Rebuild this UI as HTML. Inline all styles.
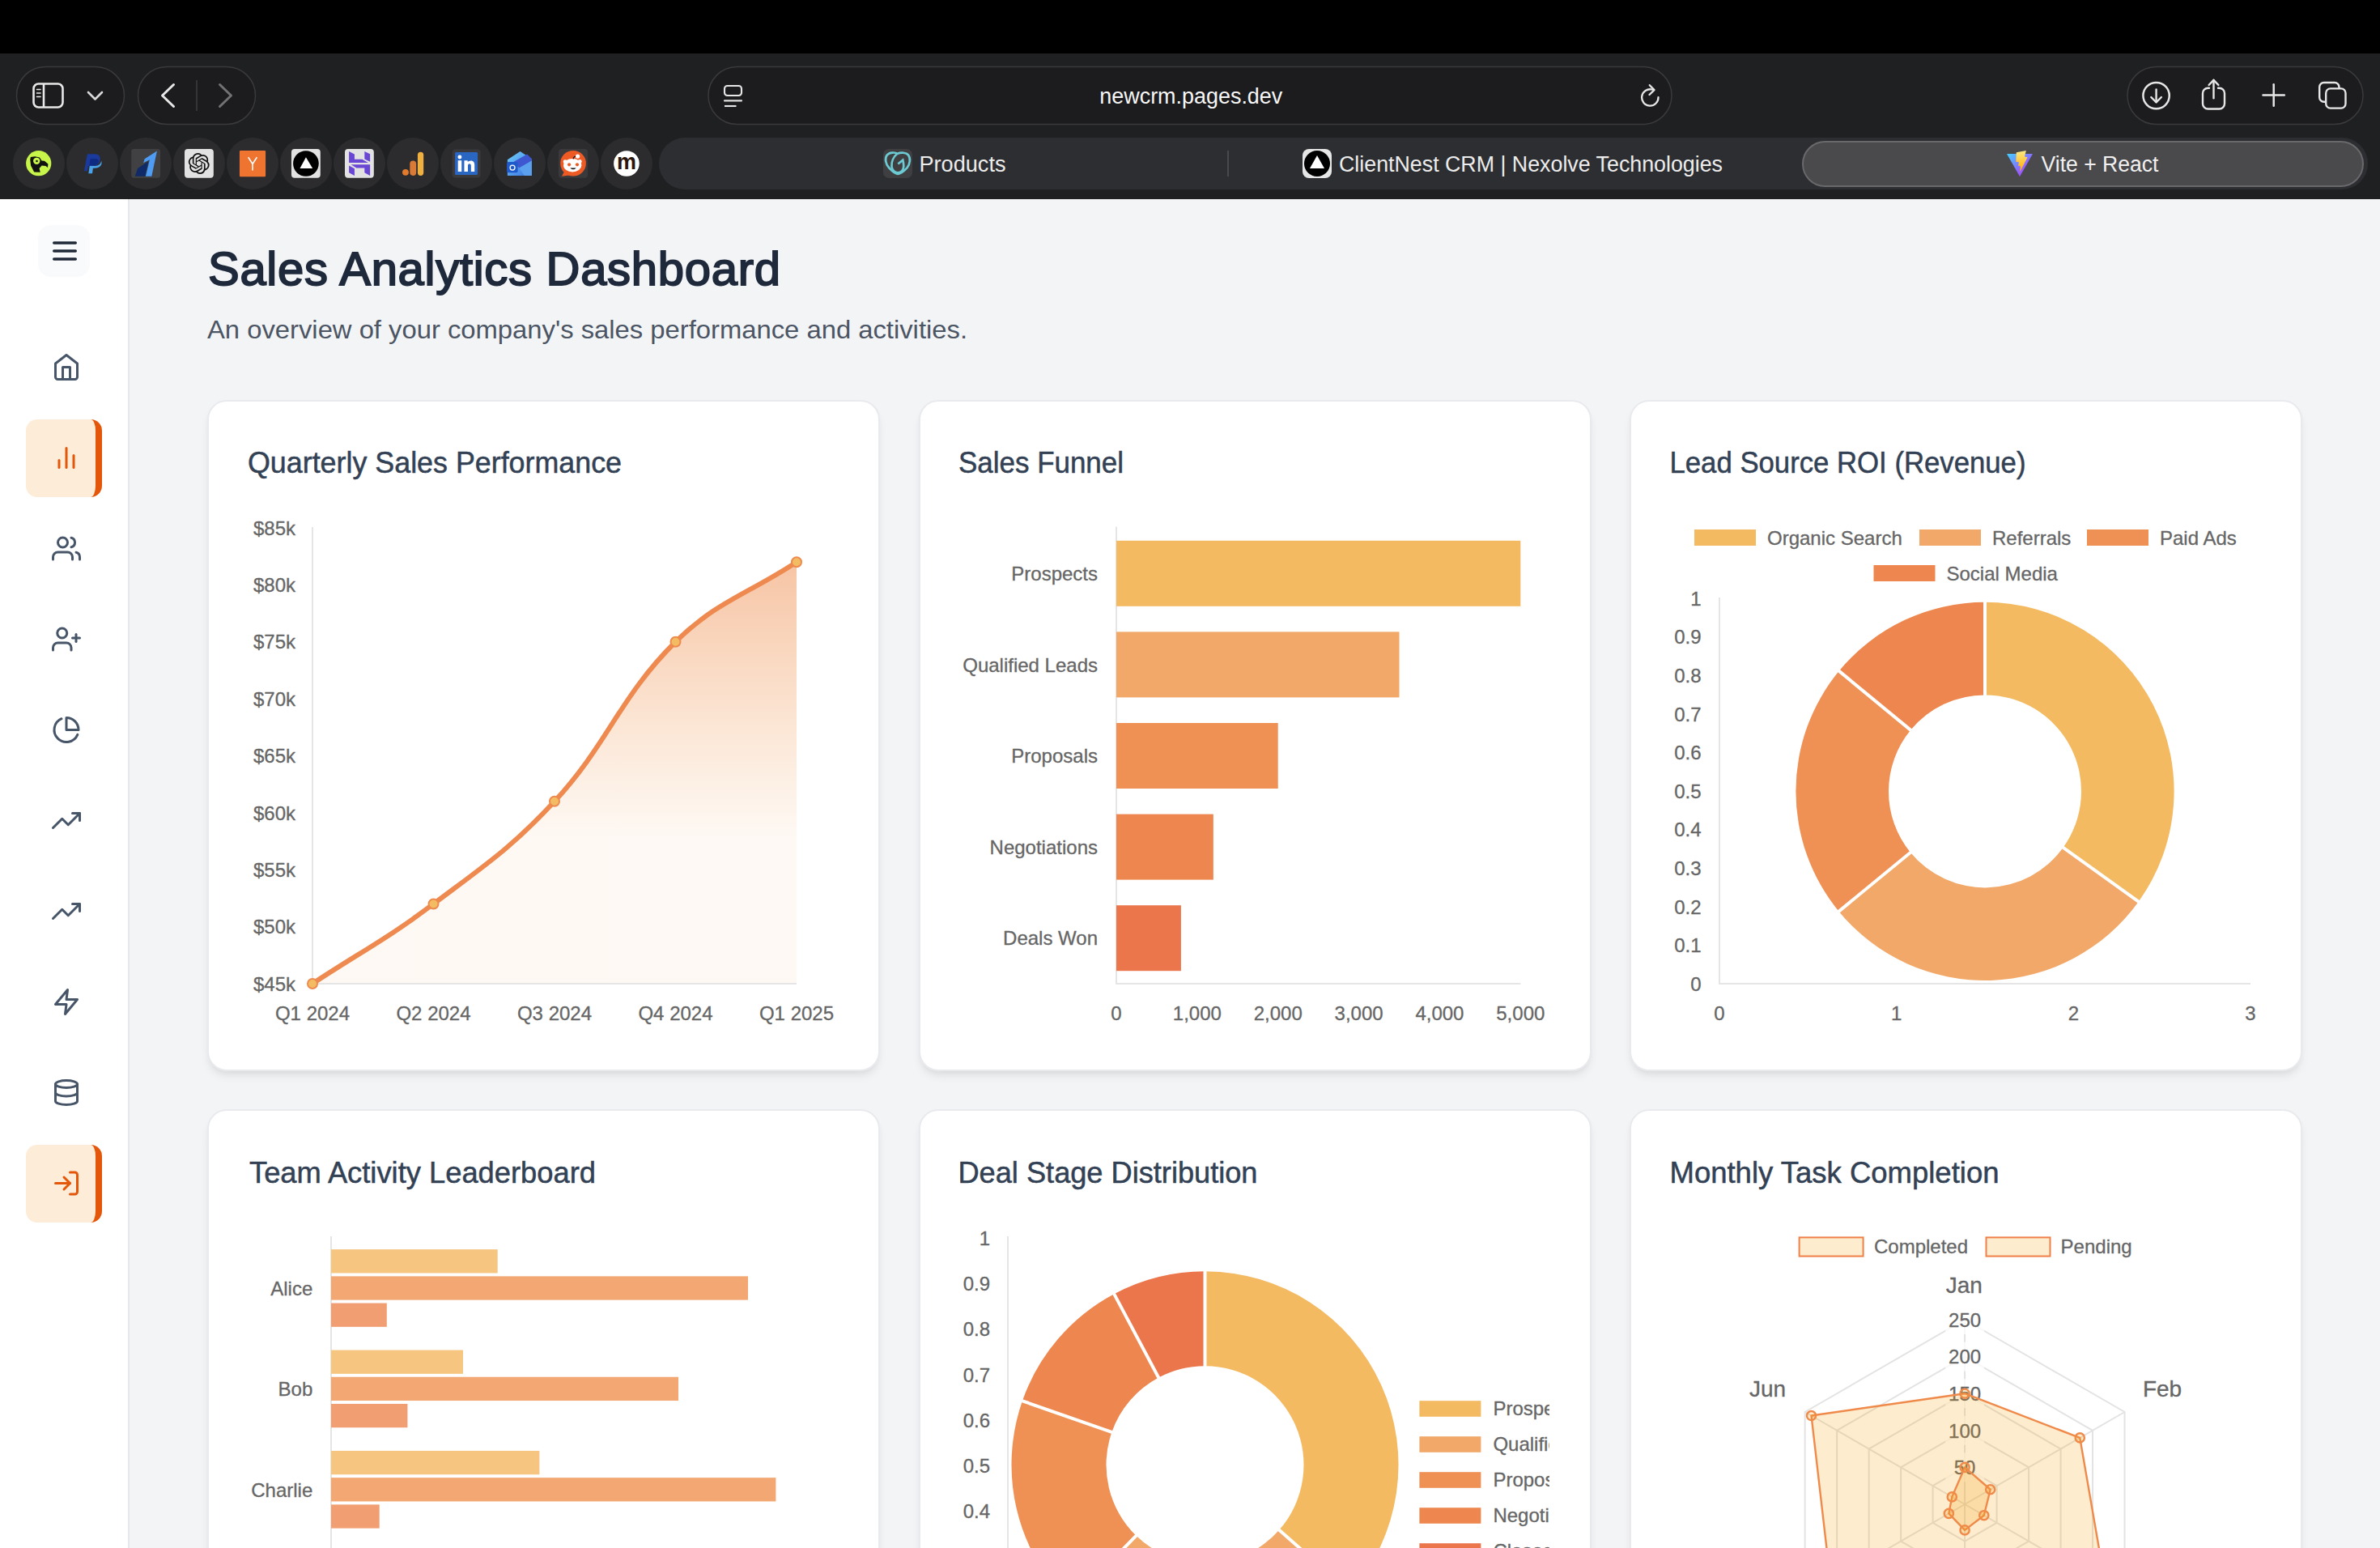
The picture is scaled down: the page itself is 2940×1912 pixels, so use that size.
<!DOCTYPE html>
<html><head><meta charset="utf-8"><title>Sales Analytics Dashboard</title><style>
html,body{margin:0;padding:0;}
body{width:2940px;height:1912px;overflow:hidden;position:relative;background:#f3f4f6;font-family:"Liberation Sans",sans-serif;}
.a{position:absolute;}
#top{left:0;top:0;width:2940px;height:66px;background:#000;}
#tb{left:0;top:66px;width:2940px;height:180px;background:#1f2022;}
#side{left:0;top:246px;width:158px;height:1666px;background:#fff;border-right:2px solid #e5e7eb;}
.card{position:absolute;background:#fff;border:2px solid #e9eaee;border-radius:24px;box-sizing:border-box;
 box-shadow:0 8px 12px -2px rgba(0,0,0,.07),0 4px 8px -4px rgba(0,0,0,.07);}
.act{position:absolute;left:32px;width:94px;height:96px;box-sizing:border-box;background:#fdecd7;border-right:8px solid #e4570b;border-radius:14px;}
svg.main{position:absolute;left:0;top:0;}
text{font-family:"Liberation Sans",sans-serif;}
text[fill="#666666"]{stroke:#666666;stroke-width:0.3px;}
</style></head><body>
<div id="top" class="a"></div>
<div id="tb" class="a"></div>
<div id="side" class="a"></div>
<div class="act" style="top:518px"></div>
<div class="act" style="top:1414px"></div>
<div class="card" style="left:256px;top:494px;width:831px;height:829px"></div>
<div class="card" style="left:1135px;top:494px;width:831px;height:829px"></div>
<div class="card" style="left:2013px;top:494px;width:831px;height:829px"></div>
<div class="card" style="left:256px;top:1370px;width:831px;height:829px"></div>
<div class="card" style="left:1135px;top:1370px;width:831px;height:829px"></div>
<div class="card" style="left:2013px;top:1370px;width:831px;height:829px"></div>

<svg class="main" width="2940" height="1912" viewBox="0 0 2940 1912">
<rect x="20.5" y="82.5" width="133" height="71" rx="35.5" fill="#1c1c1e" stroke="#3a3a3c" stroke-width="1.5"/>
<rect x="170.5" y="82.5" width="145" height="71" rx="35.5" fill="#1c1c1e" stroke="#3a3a3c" stroke-width="1.5"/>
<rect x="875" y="82.5" width="1190" height="71" rx="35.5" fill="#1c1c1e" stroke="#3a3a3c" stroke-width="1.5"/>
<rect x="2628" y="82.5" width="291" height="71" rx="35.5" fill="#1c1c1e" stroke="#3a3a3c" stroke-width="1.5"/>
<rect x="41.5" y="103.5" width="36" height="29" rx="6" fill="none" stroke="#e8e8e8" stroke-width="2.6"/>
<line x1="54" y1="104" x2="54" y2="132" stroke="#e8e8e8" stroke-width="2.6"/>
<line x1="45.5" y1="110.5" x2="50" y2="110.5" stroke="#e8e8e8" stroke-width="1.6" stroke-linecap="round"/>
<line x1="45.5" y1="115" x2="50" y2="115" stroke="#e8e8e8" stroke-width="1.6" stroke-linecap="round"/>
<line x1="45.5" y1="119.5" x2="50" y2="119.5" stroke="#e8e8e8" stroke-width="1.6" stroke-linecap="round"/>
<polyline points="109,114 117.5,122.5 126,114" fill="none" stroke="#d8d8d8" stroke-width="2.6" stroke-linecap="round" stroke-linejoin="round"/>
<polyline points="214.5,104.5 200.5,118 214.5,131.5" fill="none" stroke="#e8e8e8" stroke-width="3" stroke-linecap="round" stroke-linejoin="round"/>
<line x1="243" y1="99" x2="243" y2="137" stroke="#3c3c3e" stroke-width="1.5"/>
<polyline points="271.5,104.5 285.5,118 271.5,131.5" fill="none" stroke="#727274" stroke-width="3" stroke-linecap="round" stroke-linejoin="round"/>
<rect x="895" y="106" width="21" height="12" rx="3.5" fill="none" stroke="#e6e6e6" stroke-width="2.1"/>
<line x1="895" y1="124.4" x2="916" y2="124.4" stroke="#e0e0e0" stroke-width="2.1" stroke-linecap="round"/>
<line x1="895" y1="131" x2="909.5" y2="131" stroke="#e6e6e6" stroke-width="2.1"/>
<text x="1471.30" y="128.00" font-size="27" fill="#f7f7f7" text-anchor="middle" font-weight="500" textLength="226" lengthAdjust="spacingAndGlyphs" >newcrm.pages.dev</text>
<path d="M2048.5,120.2 A10.2,10.2 0 1 1 2040.5,110.5 L2042.5,110.9" fill="none" stroke="#e6e6e6" stroke-width="2.3" stroke-linecap="round"/>
<polyline points="2037.8,105.2 2043.5,111.1 2037.5,117" fill="none" stroke="#e6e6e6" stroke-width="2.3" stroke-linecap="round" stroke-linejoin="round"/>
<circle cx="2663.6" cy="118.1" r="16.2" fill="none" stroke="#e6e6e6" stroke-width="2.5"/>
<line x1="2663.6" y1="110.4" x2="2663.6" y2="126" stroke="#e6e6e6" stroke-width="2.4" stroke-linecap="round"/>
<polyline points="2657.3,120 2663.6,126.3 2669.9,120" fill="none" stroke="#e6e6e6" stroke-width="2.4" stroke-linecap="round" stroke-linejoin="round"/>
<path d="M2729,108.7 H2727.5 a6.5,6.5 0 0 0 -6.5,6.5 V128 a6.5,6.5 0 0 0 6.5,6.5 H2741.5 a6.5,6.5 0 0 0 6.5,-6.5 V115.2 a6.5,6.5 0 0 0 -6.5,-6.5 H2740" fill="none" stroke="#e6e6e6" stroke-width="2.4" stroke-linecap="round"/>
<line x1="2734.5" y1="99" x2="2734.5" y2="121.2" stroke="#e6e6e6" stroke-width="2.4" stroke-linecap="round"/>
<polyline points="2728.6,105 2734.5,98.8 2740.4,105" fill="none" stroke="#e6e6e6" stroke-width="2.4" stroke-linecap="round" stroke-linejoin="round"/>
<line x1="2795.5" y1="117.5" x2="2821.8" y2="117.5" stroke="#e6e6e6" stroke-width="2.5" stroke-linecap="round"/>
<line x1="2808.7" y1="104.3" x2="2808.7" y2="130.7" stroke="#e6e6e6" stroke-width="2.5" stroke-linecap="round"/>
<rect x="2865.2" y="102" width="24.3" height="23.7" rx="5.5" fill="none" stroke="#e6e6e6" stroke-width="2.4"/>
<rect x="2873.2" y="109.4" width="24.3" height="24.2" rx="5.5" fill="#1c1c1e" stroke="#e6e6e6" stroke-width="2.4"/>
<circle cx="48" cy="202" r="32" fill="#2c2c2f"/>
<circle cx="114" cy="202" r="32" fill="#2c2c2f"/>
<circle cx="180" cy="202" r="32" fill="#2c2c2f"/>
<circle cx="246" cy="202" r="32" fill="#2c2c2f"/>
<circle cx="312" cy="202" r="32" fill="#2c2c2f"/>
<circle cx="378" cy="202" r="32" fill="#2c2c2f"/>
<circle cx="444" cy="202" r="32" fill="#2c2c2f"/>
<circle cx="510" cy="202" r="32" fill="#2c2c2f"/>
<circle cx="576" cy="202" r="32" fill="#2c2c2f"/>
<circle cx="642" cy="202" r="32" fill="#2c2c2f"/>
<circle cx="708" cy="202" r="32" fill="#2c2c2f"/>
<circle cx="774" cy="202" r="32" fill="#2c2c2f"/>
<circle cx="47.71" cy="201.71" r="15.6" fill="#c8f54a"/>
<polygon points="37.83,193.89 43.18,193.31 48.95,194.55 51.58,198.42 54.88,198.83 59.41,202.54 59.00,206.90 56.36,205.01 51.58,204.60 48.54,208.06 49.77,212.67 42.19,212.42 38.08,204.43 37.25,197.18" fill="#111"/>
<circle cx="45.24" cy="198.83" r="4.2" fill="#c8f54a"/><circle cx="45.49" cy="199.00" r="1.3" fill="#111"/>
<path d="M107.85,190.18 L116.91,190.18 C123.50,190.18 124.73,195.12 122.92,199.65 C121.02,203.77 117.32,205.01 112.38,205.01 L109.08,205.01 L107.85,211.19 L103.97,211.19 Z" fill="#1a3a9c"/>
<path d="M110.73,205.01 L117.32,205.01 C122.26,204.60 124.57,202.29 125.14,198.42 C126.79,202.95 123.91,207.73 116.49,207.73 L114.85,207.73 L114.02,214.23 L109.33,214.23 Z" fill="#4aa3e8"/>
<path d="M111.55,196.36 L118.97,196.36 C123.08,196.77 123.08,202.54 117.32,204.18 L110.32,204.18 Z" fill="#0f2a82"/>
<rect x="162.21" y="184.00" width="35.83" height="35.83" rx="3" fill="#414143"/>
<polygon points="166.74,217.78 170.04,207.89 183.22,199.24 179.51,217.78" fill="#0f2a66"/>
<polygon points="193.92,186.47 187.33,217.78 179.92,217.78 184.86,197.18 177.04,201.14 178.69,196.19" fill="#4f9cf5"/>
<rect x="228.00" y="184.00" width="35.83" height="35.83" rx="4" fill="#e2e2e2"/>
<path d="M22.2819 9.8211a5.9847 5.9847 0 0 0-.5157-4.9108 6.0462 6.0462 0 0 0-6.5098-2.9A6.0651 6.0651 0 0 0 4.9807 4.1818a5.9847 5.9847 0 0 0-3.9977 2.9 6.0462 6.0462 0 0 0 .7427 7.0966 5.98 5.98 0 0 0 .511 4.9107 6.051 6.051 0 0 0 6.5146 2.9001A5.9847 5.9847 0 0 0 13.2599 24a6.0557 6.0557 0 0 0 5.7718-4.2058 5.9894 5.9894 0 0 0 3.9977-2.9001 6.0557 6.0557 0 0 0-.7475-7.0729zm-9.022 12.6081a4.4755 4.4755 0 0 1-2.8764-1.0408l.1419-.0804 4.7783-2.7582a.7948.7948 0 0 0 .3927-.6813v-6.7369l2.02 1.1686a.071.071 0 0 1 .038.052v5.5826a4.504 4.504 0 0 1-4.4945 4.4944zm-9.6607-4.1254a4.4708 4.4708 0 0 1-.5346-3.0137l.142.0852 4.783 2.7582a.7712.7712 0 0 0 .7806 0l5.8428-3.3685v2.3324a.0804.0804 0 0 1-.0332.0615L9.74 19.9502a4.4992 4.4992 0 0 1-6.1408-1.6464zM2.3408 7.8956a4.485 4.485 0 0 1 2.3655-1.9728V11.6a.7664.7664 0 0 0 .3879.6765l5.8144 3.3543-2.0201 1.1685a.0757.0757 0 0 1-.071 0l-4.8303-2.7865A4.504 4.504 0 0 1 2.3408 7.872zm16.5963 3.8558L13.1038 8.364 15.1192 7.2a.0757.0757 0 0 1 .071 0l4.8303 2.7913a4.4944 4.4944 0 0 1-.6765 8.1042v-5.6772a.79.79 0 0 0-.407-.667zm2.0107-3.0231l-.142-.0852-4.7735-2.7818a.7759.7759 0 0 0-.7854 0L9.409 9.2297V6.8974a.0662.0662 0 0 1 .0284-.0615l4.8303-2.7866a4.4992 4.4992 0 0 1 6.6802 4.66zM8.3065 12.863l-2.02-1.1638a.0804.0804 0 0 1-.038-.0567V6.0742a4.4992 4.4992 0 0 1 7.3757-3.4537l-.142.0805L8.704 5.459a.7948.7948 0 0 0-.3927.6813zm1.0976-2.3654l2.602-1.4998 2.6069 1.4998v2.9994l-2.5974 1.4997-2.6067-1.4997Z" fill="#111" transform="translate(232.75,189.00) scale(1.08)"/>
<rect x="295.96" y="186.06" width="32.13" height="32.13" rx="1" fill="#ee7430"/>
<polyline points="306.67,194.30 312.02,202.54 317.38,194.30" fill="none" stroke="#fff" stroke-width="1.6"/><line x1="312.02" y1="202.54" x2="312.02" y2="210.53" stroke="#fff" stroke-width="1.6"/>
<rect x="359.96" y="184.00" width="35.83" height="35.83" rx="4" fill="#e2e2e2"/>
<circle cx="377.92" cy="201.96" r="15.82" fill="#000"/>
<polygon points="377.92,194.30 386.16,207.89 370.51,207.89" fill="#fff"/>
<rect x="426.00" y="184.00" width="35.83" height="35.83" rx="4" fill="#e2e2e2"/>
<polygon points="431.11,186.89 437.95,190.59 437.95,196.77 447.42,196.77 454.83,200.89 431.11,200.89" fill="#6a46d4"/>
<polygon points="450.30,186.89 457.14,190.18 457.14,199.82 450.30,196.52" fill="#6a46d4"/>
<polygon points="431.11,204.60 437.95,208.30 437.95,216.95 431.11,213.25" fill="#6a46d4"/>
<polygon points="457.14,203.36 457.14,216.95 450.30,213.25 450.30,207.48 440.42,207.48 433.58,203.36" fill="#6a46d4"/>
<circle cx="500.96" cy="212.83" r="3.95" fill="#e27b2c"/>
<rect x="506.32" y="198.42" width="7.83" height="18.53" rx="3.87" fill="#d97a36"/>
<rect x="515.95" y="187.71" width="7.25" height="29.24" rx="3.62" fill="#f0b040"/>
<rect x="558.62" y="184.42" width="35.01" height="35.01" rx="4" fill="#3a3a3c"/>
<rect x="562.08" y="187.96" width="28.01" height="28.01" rx="1.5" fill="#2a67c3"/>
<circle cx="567.93" cy="194.05" r="2.47" fill="#fff"/>
<rect x="565.71" y="198.17" width="4.53" height="13.84" fill="#fff"/>
<path d="M573.45,212.01 V198.17 H577.73 V200.07 C579.22,198.01 586.22,196.77 586.22,203.77 V212.01 H581.85 V204.60 C581.85,201.30 577.98,201.30 577.98,204.60 V212.01 Z" fill="#fff"/>
<defs><linearGradient id="olg" x1="0" y1="0" x2="1" y2="1"><stop offset="0" stop-color="#6fd0fb"/><stop offset="1" stop-color="#3b6fe0"/></linearGradient></defs>
<polygon points="626.89,197.18 642.54,186.89 656.95,196.36 656.95,216.95 626.89,216.95" fill="url(#olg)"/>
<polygon points="634.71,199.65 651.19,190.59 656.95,196.36 656.95,198.42 641.30,207.48" fill="#3e56d0"/>
<polygon points="641.30,207.48 656.95,198.42 656.95,216.95 647.89,216.95" fill="#5aa0ee"/>
<rect x="626.06" y="200.07" width="13.59" height="13.18" rx="2" fill="#1f5acb"/>
<circle cx="633.06" cy="207.07" r="2.97" fill="none" stroke="#fff" stroke-width="1.32"/>
<rect x="689.90" y="184.00" width="36.24" height="35.83" rx="4" fill="#3a3a3c"/>
<circle cx="708.02" cy="201.71" r="15.82" fill="#ee5a24"/>
<polygon points="694.02,217.78 696.49,212.83 704.73,216.13" fill="#ee5a24"/>
<circle cx="698.14" cy="199.82" r="2.47" fill="#fff"/><circle cx="716.26" cy="199.49" r="2.47" fill="#fff"/>
<ellipse cx="707.20" cy="204.18" rx="11.12" ry="8.24" fill="#fff"/>
<circle cx="703.08" cy="203.36" r="2.06" fill="#ee5a24"/><circle cx="712.97" cy="203.36" r="2.06" fill="#ee5a24"/>
<path d="M704.32,207.48 Q708.02,211.19 711.73,207.48 Z" fill="#111"/>
<path d="M708.02,196.36 Q708.85,192.65 712.14,193.06" fill="none" stroke="#111" stroke-width="1.2"/>
<circle cx="713.62" cy="193.06" r="2.64" fill="#fff"/>
<circle cx="773.92" cy="201.96" r="15.82" fill="#fff"/>
<text x="773.92" y="208.71" font-size="28" fill="#2a160c" text-anchor="middle" font-weight="bold" textLength="24" lengthAdjust="spacingAndGlyphs" >m</text>
<rect x="814" y="170" width="2111" height="64" rx="32" fill="#2d2e31"/>
<line x1="1517" y1="186" x2="1517" y2="218" stroke="#48494c" stroke-width="2"/>
<rect x="1091" y="184" width="36" height="36" rx="7" fill="#3f3f41"/>
<g transform="translate(1086,180) scale(0.028433)" fill="none" stroke="#6ccad3" stroke-width="95" stroke-linecap="butt"><path d="M800,345 C700,280 450,270 340,410 C240,540 270,790 430,960 C560,1100 700,1215 810,1225 C920,1215 1080,1100 1210,960 C1350,790 1370,540 1270,410 C1180,290 950,280 800,345 Z"/><path d="M770,360 C620,480 530,700 545,900 C560,1080 690,1170 810,1170 C950,1170 1065,1060 1065,890 C1065,760 1040,660 1030,620 L820,790"/></g>
<text x="1135.50" y="212.00" font-size="27" fill="#ececec" font-weight="500" textLength="107" lengthAdjust="spacingAndGlyphs" >Products</text>
<rect x="1609" y="184" width="36" height="36" rx="8" fill="#e6e6e6"/>
<circle cx="1627" cy="202" r="16" fill="#000"/>
<polygon points="1627,192 1636,208 1618,208" fill="#fff"/>
<text x="1654.00" y="212.00" font-size="27" fill="#ececec" font-weight="500" textLength="474" lengthAdjust="spacingAndGlyphs" >ClientNest CRM | Nexolve Technologies</text>
<rect x="2227" y="175" width="692" height="55" rx="27.5" fill="#4a4a4d" stroke="#69696b" stroke-width="2"/>
<defs><linearGradient id="vg1" x1="0" y1="0" x2="1" y2="1"><stop offset="0" stop-color="#41d1ff"/><stop offset="0.55" stop-color="#8a6cff"/><stop offset="1" stop-color="#c030ff"/></linearGradient><linearGradient id="vg2" x1="0" y1="0" x2="0" y2="1"><stop offset="0" stop-color="#ffea83"/><stop offset="1" stop-color="#ffa800"/></linearGradient></defs>
<polygon points="2479,190 2511,190 2495,218" fill="url(#vg1)"/>
<polygon points="2490.78,188.28 2502.85,185.96 2500.96,193.52 2504.59,194.24 2495.29,212.27 2495.87,205.29 2493.11,204.85 2493.84,200.20 2490.35,199.77" fill="url(#vg2)"/>
<text x="2521.50" y="212.00" font-size="27" fill="#f0f0f0" font-weight="500" textLength="145" lengthAdjust="spacingAndGlyphs" >Vite + React</text>
<rect x="47" y="278" width="64" height="64" rx="16" fill="#f9fafb"/>
<g transform="translate(60.00,290.00) scale(1.6667)" fill="none" stroke="#1f2937" stroke-width="2" stroke-linecap="round" stroke-linejoin="round"><line x1="4" y1="12" x2="20" y2="12"/><line x1="4" y1="6" x2="20" y2="6"/><line x1="4" y1="18" x2="20" y2="18"/></g>
<g transform="translate(64.00,435.50) scale(1.5000)" fill="none" stroke="#475569" stroke-width="2" stroke-linecap="round" stroke-linejoin="round"><path d="M3 9l9-7 9 7v11a2 2 0 0 1-2 2H5a2 2 0 0 1-2-2z"/><polyline points="9 22 9 12 15 12 15 22"/></g>
<g transform="translate(64.00,547.50) scale(1.5000)" fill="none" stroke="#e4570b" stroke-width="2" stroke-linecap="round" stroke-linejoin="round"><line x1="18" y1="20" x2="18" y2="10"/><line x1="12" y1="20" x2="12" y2="4"/><line x1="6" y1="20" x2="6" y2="14"/></g>
<g transform="translate(64.00,659.50) scale(1.5000)" fill="none" stroke="#475569" stroke-width="2" stroke-linecap="round" stroke-linejoin="round"><path d="M17 21v-2a4 4 0 0 0-4-4H5a4 4 0 0 0-4 4v2"/><circle cx="9" cy="7" r="4"/><path d="M23 21v-2a4 4 0 0 0-3-3.87"/><path d="M16 3.13a4 4 0 0 1 0 7.75"/></g>
<g transform="translate(64.00,771.50) scale(1.5000)" fill="none" stroke="#475569" stroke-width="2" stroke-linecap="round" stroke-linejoin="round"><path d="M16 21v-2a4 4 0 0 0-4-4H5a4 4 0 0 0-4 4v2"/><circle cx="8.5" cy="7" r="4"/><line x1="20" y1="8" x2="20" y2="14"/><line x1="23" y1="11" x2="17" y2="11"/></g>
<g transform="translate(64.00,883.50) scale(1.5000)" fill="none" stroke="#475569" stroke-width="2" stroke-linecap="round" stroke-linejoin="round"><path d="M21.21 15.89A10 10 0 1 1 8 2.83"/><path d="M22 12A10 10 0 0 0 12 2v10z"/></g>
<g transform="translate(64.00,995.50) scale(1.5000)" fill="none" stroke="#475569" stroke-width="2" stroke-linecap="round" stroke-linejoin="round"><polyline points="23 6 13.5 15.5 8.5 10.5 1 18"/><polyline points="17 6 23 6 23 12"/></g>
<g transform="translate(64.00,1107.50) scale(1.5000)" fill="none" stroke="#475569" stroke-width="2" stroke-linecap="round" stroke-linejoin="round"><polyline points="23 6 13.5 15.5 8.5 10.5 1 18"/><polyline points="17 6 23 6 23 12"/></g>
<g transform="translate(64.00,1219.50) scale(1.5000)" fill="none" stroke="#475569" stroke-width="2" stroke-linecap="round" stroke-linejoin="round"><polygon points="13 2 3 14 12 14 11 22 21 10 12 10 13 2"/></g>
<g transform="translate(64.00,1331.50) scale(1.5000)" fill="none" stroke="#475569" stroke-width="2" stroke-linecap="round" stroke-linejoin="round"><ellipse cx="12" cy="5" rx="9" ry="3"/><path d="M21 12c0 1.66-4 3-9 3s-9-1.34-9-3"/><path d="M3 5v14c0 1.66 4 3 9 3s9-1.34 9-3V5"/></g>
<g transform="translate(64.00,1443.50) scale(1.5000)" fill="none" stroke="#e4570b" stroke-width="2" stroke-linecap="round" stroke-linejoin="round"><path d="M15 3h4a2 2 0 0 1 2 2v14a2 2 0 0 1-2 2h-4"/><polyline points="10 17 15 12 10 7"/><line x1="15" y1="12" x2="3" y2="12"/></g>
<text x="257.00" y="351.50" font-size="58" fill="#1e293b" textLength="707" lengthAdjust="spacing" stroke="#1e293b" stroke-width="1.9">Sales Analytics Dashboard</text>
<text x="256.00" y="418.00" font-size="32" fill="#4b5563" textLength="939" lengthAdjust="spacingAndGlyphs" >An overview of your company's sales performance and activities.</text>
<text x="306.00" y="584.00" font-size="36" fill="#334155" textLength="462" lengthAdjust="spacingAndGlyphs" stroke="#334155" stroke-width="0.5">Quarterly Sales Performance</text>
<text x="1184.00" y="584.00" font-size="36" fill="#334155" textLength="204" lengthAdjust="spacingAndGlyphs" stroke="#334155" stroke-width="0.5">Sales Funnel</text>
<text x="2062.50" y="584.00" font-size="36" fill="#334155" textLength="440" lengthAdjust="spacingAndGlyphs" stroke="#334155" stroke-width="0.5">Lead Source ROI (Revenue)</text>
<text x="308.00" y="1460.50" font-size="36" fill="#334155" textLength="428" lengthAdjust="spacingAndGlyphs" stroke="#334155" stroke-width="0.5">Team Activity Leaderboard</text>
<text x="1183.50" y="1460.50" font-size="36" fill="#334155" textLength="370" lengthAdjust="spacingAndGlyphs" stroke="#334155" stroke-width="0.5">Deal Stage Distribution</text>
<text x="2062.50" y="1460.50" font-size="36" fill="#334155" textLength="407" lengthAdjust="spacingAndGlyphs" stroke="#334155" stroke-width="0.5">Monthly Task Completion</text>
<defs><linearGradient id="lg1" x1="0" y1="636" x2="0" y2="1032" gradientUnits="userSpaceOnUse"><stop offset="0" stop-color="#ee8a4f" stop-opacity="0.6"/><stop offset="1" stop-color="#f2a35c" stop-opacity="0.07"/></linearGradient></defs>
<path d="M386.00,1215.00 C445.80,1175.59 478.40,1159.48 535.50,1116.47 C598.00,1069.40 632.13,1047.04 685.00,989.80 C751.73,917.55 765.12,861.33 834.50,792.75 C884.72,743.10 924.20,733.63 984.00,694.23 L984,1215 L386,1215 Z" fill="url(#lg1)"/>
<line x1="386" y1="651" x2="386" y2="1216" stroke="#e5e5e5" stroke-width="2"/>
<line x1="385" y1="1215" x2="984" y2="1215" stroke="#e5e5e5" stroke-width="2"/>
<path d="M386.00,1215.00 C445.80,1175.59 478.40,1159.48 535.50,1116.47 C598.00,1069.40 632.13,1047.04 685.00,989.80 C751.73,917.55 765.12,861.33 834.50,792.75 C884.72,743.10 924.20,733.63 984.00,694.23" fill="none" stroke="#ee8a4f" stroke-width="6" stroke-linejoin="round"/>
<circle cx="386.00" cy="1215.00" r="6" fill="#f3bb62" stroke="#ee8a4f" stroke-width="2"/>
<circle cx="535.50" cy="1116.47" r="6" fill="#f3bb62" stroke="#ee8a4f" stroke-width="2"/>
<circle cx="685.00" cy="989.80" r="6" fill="#f3bb62" stroke="#ee8a4f" stroke-width="2"/>
<circle cx="834.50" cy="792.75" r="6" fill="#f3bb62" stroke="#ee8a4f" stroke-width="2"/>
<circle cx="984.00" cy="694.23" r="6" fill="#f3bb62" stroke="#ee8a4f" stroke-width="2"/>
<text x="365.00" y="1223.70" font-size="24" fill="#666666" text-anchor="end" >$45k</text>
<text x="365.00" y="1153.33" font-size="24" fill="#666666" text-anchor="end" >$50k</text>
<text x="365.00" y="1082.95" font-size="24" fill="#666666" text-anchor="end" >$55k</text>
<text x="365.00" y="1012.58" font-size="24" fill="#666666" text-anchor="end" >$60k</text>
<text x="365.00" y="942.20" font-size="24" fill="#666666" text-anchor="end" >$65k</text>
<text x="365.00" y="871.83" font-size="24" fill="#666666" text-anchor="end" >$70k</text>
<text x="365.00" y="801.45" font-size="24" fill="#666666" text-anchor="end" >$75k</text>
<text x="365.00" y="731.08" font-size="24" fill="#666666" text-anchor="end" >$80k</text>
<text x="365.00" y="660.70" font-size="24" fill="#666666" text-anchor="end" >$85k</text>
<text x="386.00" y="1260.00" font-size="24" fill="#666666" text-anchor="middle" >Q1 2024</text>
<text x="535.50" y="1260.00" font-size="24" fill="#666666" text-anchor="middle" >Q2 2024</text>
<text x="685.00" y="1260.00" font-size="24" fill="#666666" text-anchor="middle" >Q3 2024</text>
<text x="834.50" y="1260.00" font-size="24" fill="#666666" text-anchor="middle" >Q4 2024</text>
<text x="984.00" y="1260.00" font-size="24" fill="#666666" text-anchor="middle" >Q1 2025</text>
<line x1="1379" y1="650.5" x2="1379" y2="1216" stroke="#e5e5e5" stroke-width="2"/>
<line x1="1378" y1="1215" x2="1878.3" y2="1215" stroke="#e5e5e5" stroke-width="2"/>
<rect x="1379" y="667.80" width="499.30" height="81" fill="#f3ba62"/>
<text x="1356.00" y="717.00" font-size="24" fill="#666666" text-anchor="end" >Prospects</text>
<rect x="1379" y="780.40" width="349.51" height="81" fill="#f1a868"/>
<text x="1356.00" y="829.60" font-size="24" fill="#666666" text-anchor="end" >Qualified Leads</text>
<rect x="1379" y="893.00" width="199.72" height="81" fill="#ef9155"/>
<text x="1356.00" y="942.20" font-size="24" fill="#666666" text-anchor="end" >Proposals</text>
<rect x="1379" y="1005.60" width="119.83" height="81" fill="#ee874f"/>
<text x="1356.00" y="1054.80" font-size="24" fill="#666666" text-anchor="end" >Negotiations</text>
<rect x="1379" y="1118.20" width="79.89" height="81" fill="#ec764b"/>
<text x="1356.00" y="1167.40" font-size="24" fill="#666666" text-anchor="end" >Deals Won</text>
<text x="1379.00" y="1260.00" font-size="24" fill="#666666" text-anchor="middle" >0</text>
<text x="1478.86" y="1260.00" font-size="24" fill="#666666" text-anchor="middle" >1,000</text>
<text x="1578.72" y="1260.00" font-size="24" fill="#666666" text-anchor="middle" >2,000</text>
<text x="1678.58" y="1260.00" font-size="24" fill="#666666" text-anchor="middle" >3,000</text>
<text x="1778.44" y="1260.00" font-size="24" fill="#666666" text-anchor="middle" >4,000</text>
<text x="1878.30" y="1260.00" font-size="24" fill="#666666" text-anchor="middle" >5,000</text>
<rect x="2093" y="654" width="76" height="20" fill="#f3ba62"/>
<text x="2183.00" y="672.70" font-size="24" fill="#666666" >Organic Search</text>
<rect x="2371" y="654" width="76" height="20" fill="#f1a868"/>
<text x="2461.00" y="672.70" font-size="24" fill="#666666" >Referrals</text>
<rect x="2578" y="654" width="76" height="20" fill="#ef9155"/>
<text x="2668.00" y="672.70" font-size="24" fill="#666666" >Paid Ads</text>
<rect x="2314.5" y="698" width="76" height="20" fill="#ee874f"/>
<text x="2404.50" y="716.70" font-size="24" fill="#666666" >Social Media</text>
<line x1="2124" y1="738" x2="2124" y2="1216" stroke="#e5e5e5" stroke-width="2"/>
<line x1="2123" y1="1215" x2="2780" y2="1215" stroke="#e5e5e5" stroke-width="2"/>
<text x="2101.50" y="1223.70" font-size="24" fill="#666666" text-anchor="end" >0</text>
<text x="2101.50" y="1176.10" font-size="24" fill="#666666" text-anchor="end" >0.1</text>
<text x="2101.50" y="1128.50" font-size="24" fill="#666666" text-anchor="end" >0.2</text>
<text x="2101.50" y="1080.90" font-size="24" fill="#666666" text-anchor="end" >0.3</text>
<text x="2101.50" y="1033.30" font-size="24" fill="#666666" text-anchor="end" >0.4</text>
<text x="2101.50" y="985.70" font-size="24" fill="#666666" text-anchor="end" >0.5</text>
<text x="2101.50" y="938.10" font-size="24" fill="#666666" text-anchor="end" >0.6</text>
<text x="2101.50" y="890.50" font-size="24" fill="#666666" text-anchor="end" >0.7</text>
<text x="2101.50" y="842.90" font-size="24" fill="#666666" text-anchor="end" >0.8</text>
<text x="2101.50" y="795.30" font-size="24" fill="#666666" text-anchor="end" >0.9</text>
<text x="2101.50" y="747.70" font-size="24" fill="#666666" text-anchor="end" >1</text>
<text x="2124.00" y="1260.00" font-size="24" fill="#666666" text-anchor="middle" >0</text>
<text x="2342.67" y="1260.00" font-size="24" fill="#666666" text-anchor="middle" >1</text>
<text x="2561.33" y="1260.00" font-size="24" fill="#666666" text-anchor="middle" >2</text>
<text x="2780.00" y="1260.00" font-size="24" fill="#666666" text-anchor="middle" >3</text>
<path d="M2452.00,743.80 A233.6,233.6 0 0 1 2641.70,1113.72 L2548.64,1046.84 A119,119 0 0 0 2452.00,858.40 Z" fill="#f3ba62"/>
<path d="M2641.70,1113.72 A233.6,233.6 0 0 1 2271.49,1125.67 L2360.04,1052.93 A119,119 0 0 0 2548.64,1046.84 Z" fill="#f1a868"/>
<path d="M2271.49,1125.67 A233.6,233.6 0 0 1 2271.75,828.81 L2360.18,901.71 A119,119 0 0 0 2360.04,1052.93 Z" fill="#ef9155"/>
<path d="M2271.75,828.81 A233.6,233.6 0 0 1 2452.00,743.80 L2452.00,858.40 A119,119 0 0 0 2360.18,901.71 Z" fill="#ee874f"/>
<line x1="2452.00" y1="861.40" x2="2452.00" y2="740.80" stroke="#fff" stroke-width="4"/>
<line x1="2546.20" y1="1045.09" x2="2644.14" y2="1115.47" stroke="#fff" stroke-width="4"/>
<line x1="2362.36" y1="1051.03" x2="2269.17" y2="1127.58" stroke="#fff" stroke-width="4"/>
<line x1="2362.49" y1="903.61" x2="2269.43" y2="826.90" stroke="#fff" stroke-width="4"/>
<line x1="409" y1="1527" x2="409" y2="1912" stroke="#e5e5e5" stroke-width="2"/>
<rect x="409" y="1543.15" width="205.70" height="29.3" fill="#f6c680"/>
<rect x="409" y="1576.35" width="515.00" height="29.3" fill="#f3a873"/>
<rect x="409" y="1609.55" width="68.80" height="29.3" fill="#f19e72"/>
<text x="386.30" y="1599.70" font-size="24" fill="#666666" text-anchor="end" >Alice</text>
<rect x="409" y="1667.55" width="163.00" height="29.3" fill="#f6c680"/>
<rect x="409" y="1700.75" width="429.00" height="29.3" fill="#f3a873"/>
<rect x="409" y="1733.95" width="94.40" height="29.3" fill="#f19e72"/>
<text x="386.30" y="1724.10" font-size="24" fill="#666666" text-anchor="end" >Bob</text>
<rect x="409" y="1791.95" width="257.40" height="29.3" fill="#f6c680"/>
<rect x="409" y="1825.15" width="549.40" height="29.3" fill="#f3a873"/>
<rect x="409" y="1858.35" width="59.70" height="29.3" fill="#f19e72"/>
<text x="386.30" y="1848.50" font-size="24" fill="#666666" text-anchor="end" >Charlie</text>
<line x1="1245" y1="1527" x2="1245" y2="1912" stroke="#e5e5e5" stroke-width="2"/>
<text x="1223.00" y="1537.70" font-size="24" fill="#666666" text-anchor="end" >1</text>
<text x="1223.00" y="1593.97" font-size="24" fill="#666666" text-anchor="end" >0.9</text>
<text x="1223.00" y="1650.24" font-size="24" fill="#666666" text-anchor="end" >0.8</text>
<text x="1223.00" y="1706.51" font-size="24" fill="#666666" text-anchor="end" >0.7</text>
<text x="1223.00" y="1762.78" font-size="24" fill="#666666" text-anchor="end" >0.6</text>
<text x="1223.00" y="1819.05" font-size="24" fill="#666666" text-anchor="end" >0.5</text>
<text x="1223.00" y="1875.32" font-size="24" fill="#666666" text-anchor="end" >0.4</text>
<path d="M1488.50,1570.30 A239,239 0 0 1 1668.05,1967.04 L1580.15,1889.82 A122,122 0 0 0 1488.50,1687.30 Z" fill="#f3ba62"/>
<path d="M1668.05,1967.04 A239,239 0 0 1 1321.88,1980.64 L1403.45,1896.76 A122,122 0 0 0 1580.15,1889.82 Z" fill="#f1a868"/>
<path d="M1321.88,1980.64 A239,239 0 0 1 1262.93,1730.31 L1373.36,1768.98 A122,122 0 0 0 1403.45,1896.76 Z" fill="#ef9155"/>
<path d="M1262.93,1730.31 A239,239 0 0 1 1376.30,1598.28 L1431.22,1701.58 A122,122 0 0 0 1373.36,1768.98 Z" fill="#ee874f"/>
<path d="M1376.30,1598.28 A239,239 0 0 1 1488.50,1570.30 L1488.50,1687.30 A122,122 0 0 0 1431.22,1701.58 Z" fill="#ec764b"/>
<line x1="1488.50" y1="1690.30" x2="1488.50" y2="1567.30" stroke="#fff" stroke-width="4"/>
<line x1="1577.90" y1="1887.84" x2="1670.31" y2="1969.02" stroke="#fff" stroke-width="4"/>
<line x1="1405.54" y1="1894.61" x2="1319.79" y2="1982.79" stroke="#fff" stroke-width="4"/>
<line x1="1376.19" y1="1769.97" x2="1260.10" y2="1729.32" stroke="#fff" stroke-width="4"/>
<line x1="1432.63" y1="1704.23" x2="1374.89" y2="1595.63" stroke="#fff" stroke-width="4"/>
<defs><clipPath id="lgclip"><rect x="1700" y="1700" width="214" height="250"/></clipPath></defs>
<rect x="1753.4" y="1730.2" width="76" height="19.6" fill="#f3ba62"/>
<rect x="1753.4" y="1774.2" width="76" height="19.6" fill="#f1a868"/>
<rect x="1753.4" y="1818.2" width="76" height="19.6" fill="#ef9155"/>
<rect x="1753.4" y="1862.2" width="76" height="19.6" fill="#ee874f"/>
<rect x="1753.4" y="1906.2" width="76" height="19.6" fill="#ec764b"/>
<g clip-path="url(#lgclip)"><text x="1844.40" y="1748.30" font-size="24" fill="#666666" >Prospects</text><text x="1844.40" y="1792.30" font-size="24" fill="#666666" >Qualified Leads</text><text x="1844.40" y="1836.30" font-size="24" fill="#666666" >Proposals</text><text x="1844.40" y="1880.30" font-size="24" fill="#666666" >Negotiations</text><text x="1844.40" y="1924.30" font-size="24" fill="#666666" >Closed Won</text></g>
<rect x="2222.6" y="1528.4" width="79" height="23.2" fill="#fdecce" stroke="#ef8048" stroke-width="2"/>
<text x="2315.00" y="1548.40" font-size="24" fill="#666666" >Completed</text>
<rect x="2453.5" y="1528.4" width="79" height="23.2" fill="#fdecce" stroke="#ef8048" stroke-width="2"/>
<text x="2545.60" y="1548.40" font-size="24" fill="#666666" >Pending</text>
<polygon points="2427.10,1812.40 2466.59,1835.20 2466.59,1880.80 2427.10,1903.60 2387.61,1880.80 2387.61,1835.20" fill="none" stroke="#e3e3e3" stroke-width="2"/>
<polygon points="2427.10,1766.80 2506.08,1812.40 2506.08,1903.60 2427.10,1949.20 2348.12,1903.60 2348.12,1812.40" fill="none" stroke="#e3e3e3" stroke-width="2"/>
<polygon points="2427.10,1721.20 2545.57,1789.60 2545.57,1926.40 2427.10,1994.80 2308.63,1926.40 2308.63,1789.60" fill="none" stroke="#e3e3e3" stroke-width="2"/>
<polygon points="2427.10,1675.60 2585.06,1766.80 2585.06,1949.20 2427.10,2040.40 2269.14,1949.20 2269.14,1766.80" fill="none" stroke="#e3e3e3" stroke-width="2"/>
<polygon points="2427.10,1630.00 2624.55,1744.00 2624.55,1972.00 2427.10,2086.00 2229.65,1972.00 2229.65,1744.00" fill="none" stroke="#e3e3e3" stroke-width="2"/>
<line x1="2427.1" y1="1858" x2="2427.10" y2="1630.00" stroke="#e3e3e3" stroke-width="2"/>
<line x1="2427.1" y1="1858" x2="2624.55" y2="1744.00" stroke="#e3e3e3" stroke-width="2"/>
<line x1="2427.1" y1="1858" x2="2624.55" y2="1972.00" stroke="#e3e3e3" stroke-width="2"/>
<line x1="2427.1" y1="1858" x2="2427.10" y2="2086.00" stroke="#e3e3e3" stroke-width="2"/>
<line x1="2427.1" y1="1858" x2="2229.65" y2="1972.00" stroke="#e3e3e3" stroke-width="2"/>
<line x1="2427.1" y1="1858" x2="2229.65" y2="1744.00" stroke="#e3e3e3" stroke-width="2"/>
<text x="2426.30" y="1596.60" font-size="28" fill="#666666" text-anchor="middle" >Jan</text>
<text x="2671.00" y="1725.00" font-size="28" fill="#666666" text-anchor="middle" >Feb</text>
<text x="2183.60" y="1725.00" font-size="28" fill="#666666" text-anchor="middle" >Jun</text>
<rect x="2403.1" y="1794.4" width="48" height="36" fill="#fff" fill-opacity="0.75"/>
<text x="2427.10" y="1821.10" font-size="24" fill="#666666" text-anchor="middle" >50</text>
<rect x="2403.1" y="1748.8" width="48" height="36" fill="#fff" fill-opacity="0.75"/>
<text x="2427.10" y="1775.50" font-size="24" fill="#666666" text-anchor="middle" >100</text>
<rect x="2403.1" y="1703.2" width="48" height="36" fill="#fff" fill-opacity="0.75"/>
<text x="2427.10" y="1729.90" font-size="24" fill="#666666" text-anchor="middle" >150</text>
<rect x="2403.1" y="1657.6" width="48" height="36" fill="#fff" fill-opacity="0.75"/>
<text x="2427.10" y="1684.30" font-size="24" fill="#666666" text-anchor="middle" >200</text>
<rect x="2403.1" y="1612.0" width="48" height="36" fill="#fff" fill-opacity="0.75"/>
<text x="2427.10" y="1638.70" font-size="24" fill="#666666" text-anchor="middle" >250</text>
<polygon points="2427.10,1721.20 2569.27,1775.92 2600.86,1958.32 2427.10,2040.40 2261.24,1953.76 2237.54,1748.56" fill="#f59e0b" fill-opacity="0.2" stroke="#ef8a4a" stroke-width="2.4" stroke-linejoin="round"/>
<circle cx="2427.10" cy="1721.20" r="5.6" fill="#f59e0b" fill-opacity="0.2" stroke="#ef8a4a" stroke-width="2.4"/>
<circle cx="2569.27" cy="1775.92" r="5.6" fill="#f59e0b" fill-opacity="0.2" stroke="#ef8a4a" stroke-width="2.4"/>
<circle cx="2600.86" cy="1958.32" r="5.6" fill="#f59e0b" fill-opacity="0.2" stroke="#ef8a4a" stroke-width="2.4"/>
<circle cx="2427.10" cy="2040.40" r="5.6" fill="#f59e0b" fill-opacity="0.2" stroke="#ef8a4a" stroke-width="2.4"/>
<circle cx="2261.24" cy="1953.76" r="5.6" fill="#f59e0b" fill-opacity="0.2" stroke="#ef8a4a" stroke-width="2.4"/>
<circle cx="2237.54" cy="1748.56" r="5.6" fill="#f59e0b" fill-opacity="0.2" stroke="#ef8a4a" stroke-width="2.4"/>
<polygon points="2427.10,1812.40 2458.69,1839.76 2450.79,1871.68 2427.10,1889.92 2407.35,1869.40 2411.30,1848.88" fill="#f59e0b" fill-opacity="0.2" stroke="#ef8a4a" stroke-width="2.4" stroke-linejoin="round"/>
<circle cx="2427.10" cy="1812.40" r="5.6" fill="#f59e0b" fill-opacity="0.2" stroke="#ef8a4a" stroke-width="2.4"/>
<circle cx="2458.69" cy="1839.76" r="5.6" fill="#f59e0b" fill-opacity="0.2" stroke="#ef8a4a" stroke-width="2.4"/>
<circle cx="2450.79" cy="1871.68" r="5.6" fill="#f59e0b" fill-opacity="0.2" stroke="#ef8a4a" stroke-width="2.4"/>
<circle cx="2427.10" cy="1889.92" r="5.6" fill="#f59e0b" fill-opacity="0.2" stroke="#ef8a4a" stroke-width="2.4"/>
<circle cx="2407.35" cy="1869.40" r="5.6" fill="#f59e0b" fill-opacity="0.2" stroke="#ef8a4a" stroke-width="2.4"/>
<circle cx="2411.30" cy="1848.88" r="5.6" fill="#f59e0b" fill-opacity="0.2" stroke="#ef8a4a" stroke-width="2.4"/>
</svg>
</body></html>
